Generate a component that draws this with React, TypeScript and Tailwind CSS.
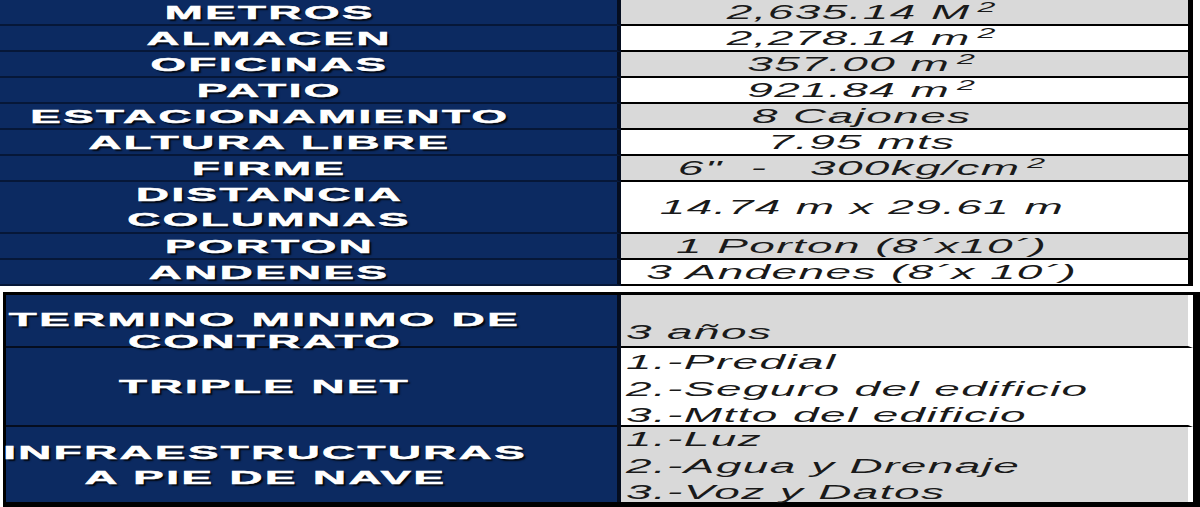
import React from "react";

type Row = {
  label: string[];
  value: React.ReactNode;
  gray: boolean;
  tall?: boolean;
};

const Sq = () => (
  <span className="ml-[3px] inline-block align-[0.5em] text-[14px] leading-none">2</span>
);

const specs: Row[] = [
  { label: ["METROS"], value: <>2,635.14 M<Sq /></>, gray: true },
  { label: ["ALMACEN"], value: <>2,278.14 m<Sq /></>, gray: false },
  { label: ["OFICINAS"], value: <>357.00 m<Sq /></>, gray: true },
  { label: ["PATIO"], value: <>921.84 m<Sq /></>, gray: false },
  { label: ["ESTACIONAMIENTO"], value: "8 Cajones", gray: true },
  { label: ["ALTURA LIBRE"], value: "7.95 mts", gray: false },
  { label: ["FIRME"], value: <>{'6"  -   300kg/cm'}<Sq /></>, gray: true },
  { label: ["DISTANCIA", "COLUMNAS"], value: "14.74 m x 29.61 m", gray: false, tall: true },
  { label: ["PORTON"], value: "1 Porton (8´x10´)", gray: true },
  { label: ["ANDENES"], value: "3 Andenes (8´x 10´)", gray: false },
];

const terms = [
  { label: ["TERMINO MINIMO DE", "CONTRATO"], lines: ["3 años"], gray: true, h: "h-[53px]", pad: "pt-[25px]", lpad: "pt-[20px]" },
  { label: ["TRIPLE NET"], lines: ["1.-Predial", "2.-Seguro del edificio", "3.-Mtto del edificio"], gray: false, h: "h-[79px]", pad: "pt-[2px]", lpad: "" },
  { label: ["INFRAESTRUCTURAS", "A PIE DE NAVE"], lines: ["1.-Luz", "2.-Agua y Drenaje", "3.-Voz y Datos"], gray: true, h: "h-[75px]", pad: "pt-0", lpad: "" },
];

const labelText =
  "inline-block scale-x-[2.4] whitespace-nowrap text-[19px] font-bold tracking-[0.055em] text-white [text-shadow:1px_2px_1px_rgba(0,0,0,0.85)] [-webkit-text-stroke:0.5px_white]";
const valueText =
  "inline-block scale-x-[2.3] whitespace-pre text-[20px] italic tracking-[0.03em] text-[#1a1a1a]";

const Label = ({ lines, leading }: { lines: string[]; leading: string }) => (
  <div className={`flex flex-col items-center ${leading}`}>
    {lines.map((l) => (
      <span key={l} className={labelText}>
        {l}
      </span>
    ))}
  </div>
);

export default function App() {
  return (
    <div className="h-[507px] w-[1200px] overflow-hidden bg-white font-['Liberation_Sans',Arial,sans-serif]">
      {/* caracteristicas */}
      <div className="w-[1193px] border-r-[5px] border-black">
        {specs.map((r) => (
          <div key={r.label.join()} className={`flex ${r.tall ? "h-[52px]" : "h-[26px]"}`}>
            <div className="flex w-[621px] items-center justify-center border-r-4 border-b-2 border-r-[#050d1f] border-b-[#061738] bg-[#0c2a61] pr-[78px]">
              <Label lines={r.label} leading="leading-[25px]" />
            </div>
            <div
              className={`flex flex-1 items-center justify-center border-b-2 border-black pr-[85px] ${
                r.gray ? "bg-[#d9d9d9]" : "bg-white"
              }`}
            >
              <span className={valueText}>{r.value}</span>
            </div>
          </div>
        ))}
      </div>

      {/* condiciones */}
      <div className="mt-[6px] ml-[3px] w-[1197px] border-t-[3px] border-r-[7px] border-b-[5px] border-l-[3px] border-black">
        {terms.map((t, i) => (
          <div key={t.lines[0]} className={`flex ${t.h}`}>
            <div
              className={`flex w-[615px] items-center justify-center border-r-4 border-r-[#050d1f] bg-[#0c2a61] pr-[93px] ${
                i < terms.length - 1 ? "border-b-2 border-b-[#050d1f]" : ""
              } ${t.lpad}`}
            >
              <Label lines={t.label} leading={i === 0 ? "leading-[22px]" : "leading-[25px]"} />
            </div>
            <div
              className={`flex-1 border-r-[5px] border-r-white pl-[5px] ${t.pad} ${
                i < terms.length - 1 ? "border-b-2 border-b-black" : ""
              } ${t.gray ? "bg-[#d9d9d9]" : "bg-white"}`}
            >
              {t.lines.map((l) => (
                <div key={l} className="leading-[24.5px]">
                  <span className={`${valueText} origin-left`}>{l}</span>
                </div>
              ))}
            </div>
          </div>
        ))}
      </div>
    </div>
  );
}
